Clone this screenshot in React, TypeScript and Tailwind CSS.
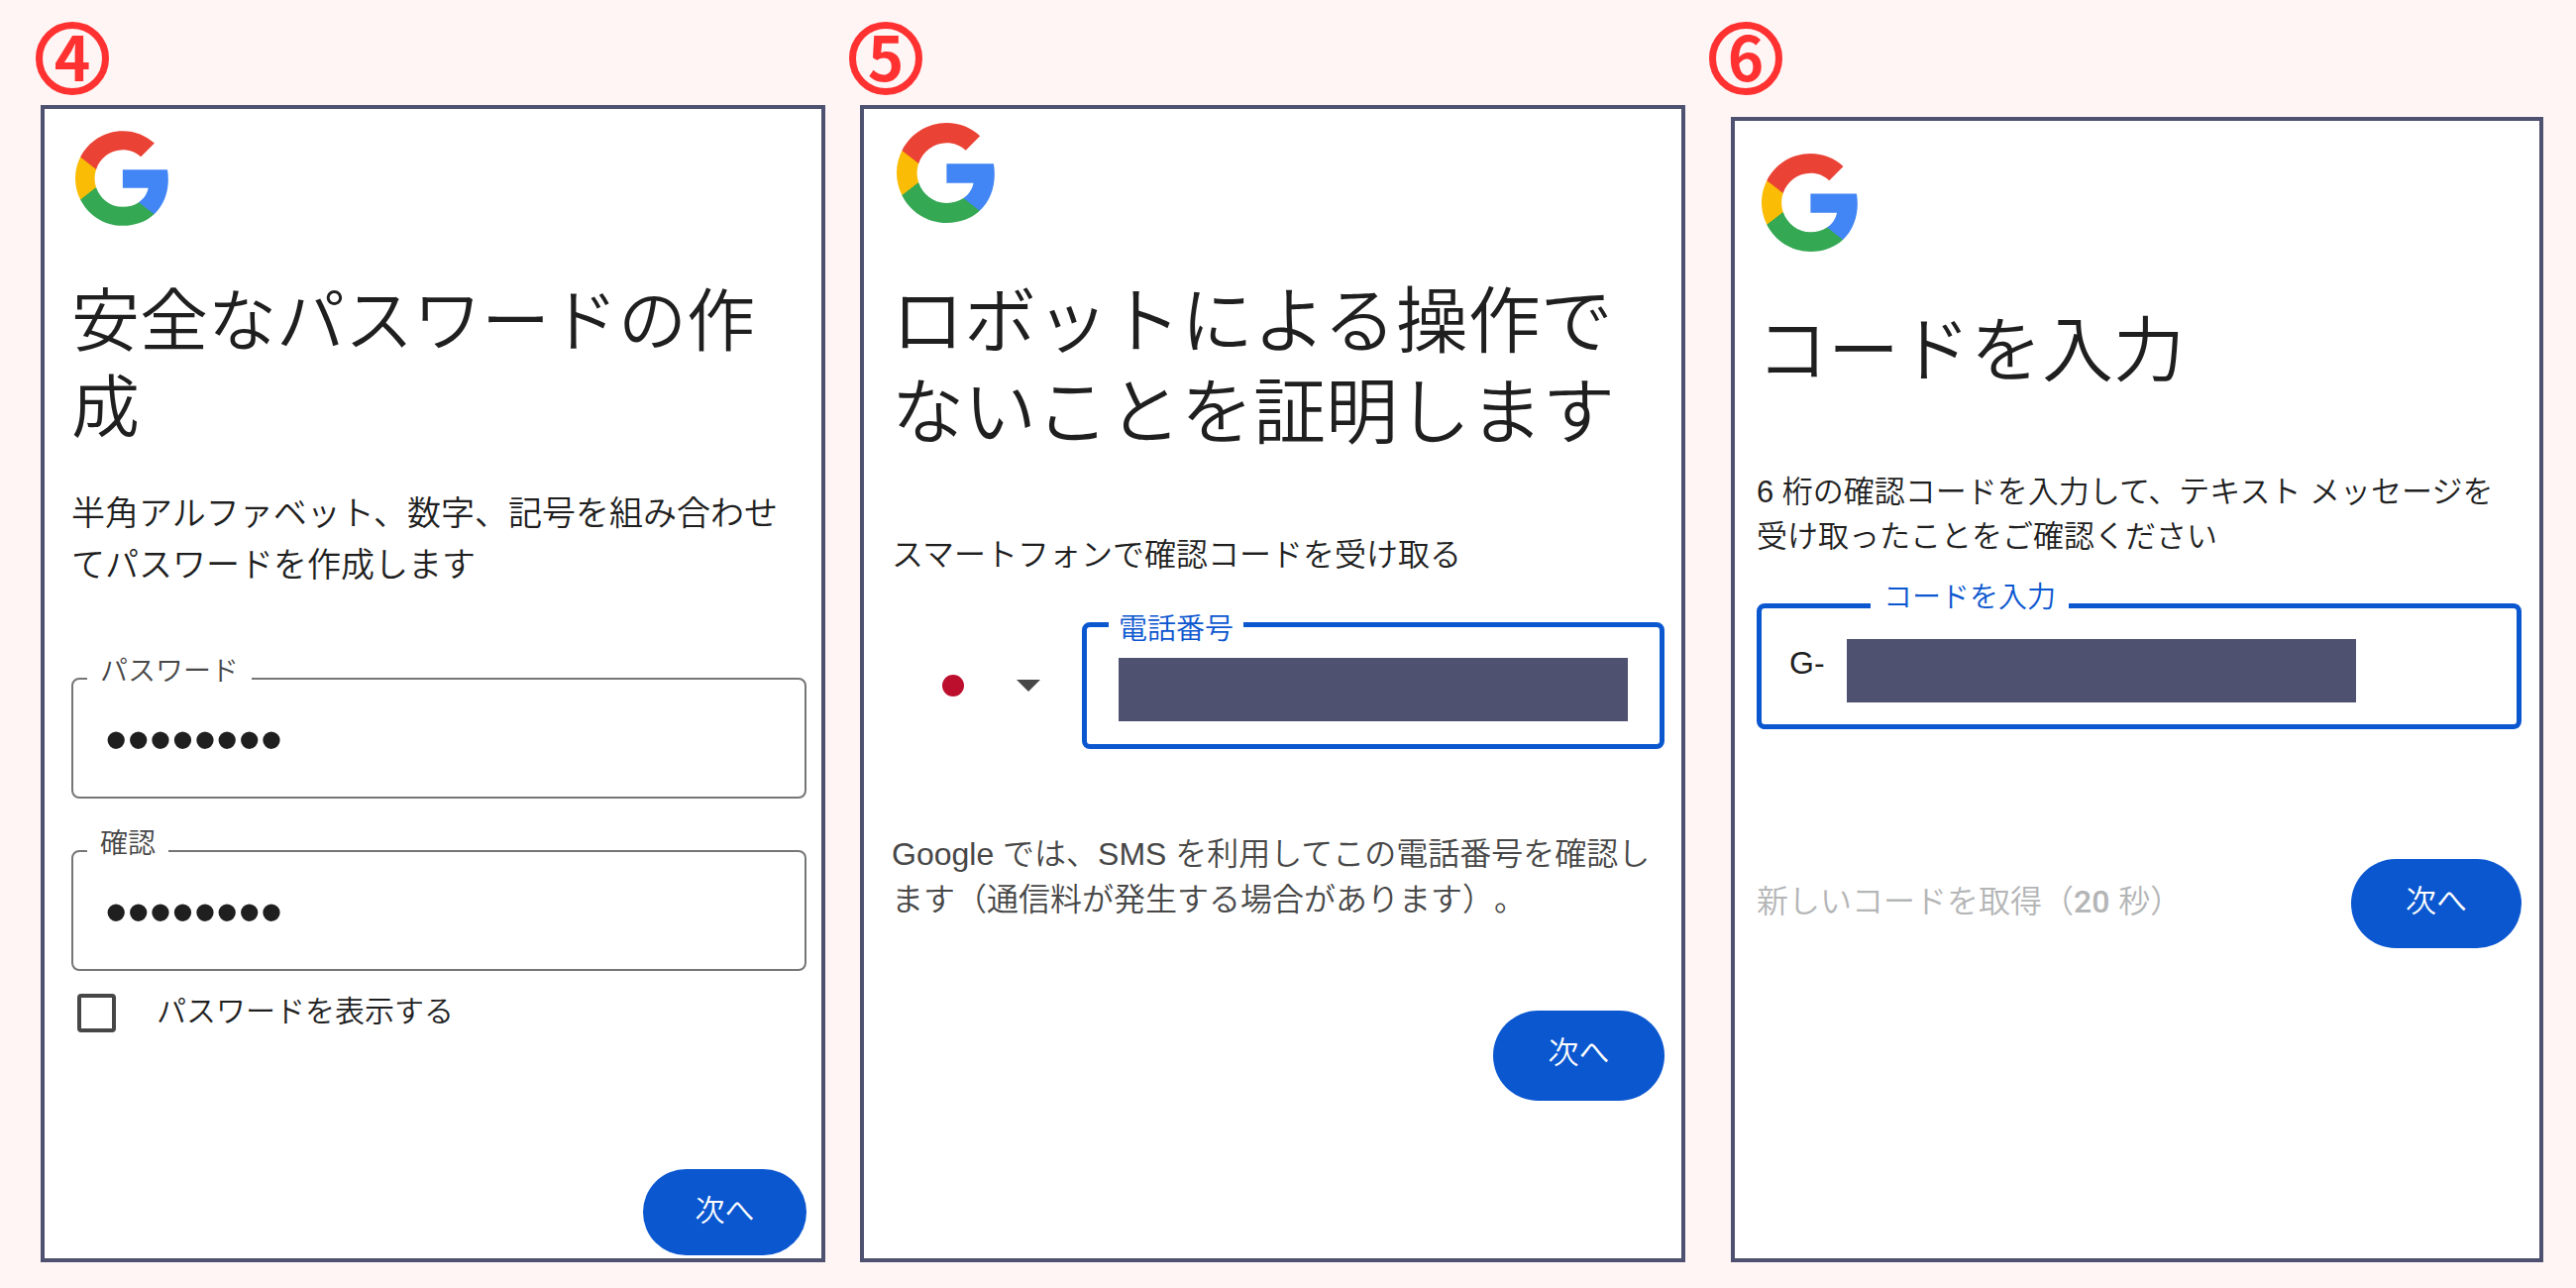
import React from "react";
import { useState } from "react";

function GoogleLogo({ className }: { className: string }){
    return(
        <svg viewBox="1 1 21.6 22" className={className} role="img" aria-label="Google">
            <path fill="#4285F4" d="M22.56 12.25c0-.78-.07-1.53-.2-2.25H12v4.26h5.92c-.26 1.37-1.04 2.53-2.21 3.31v2.77h3.57c2.08-1.92 3.28-4.74 3.28-8.09z" />
            <path fill="#34A853" d="M12 23c2.97 0 5.46-.98 7.28-2.66l-3.57-2.77c-.98.66-2.23 1.06-3.71 1.06-2.86 0-5.29-1.93-6.16-4.53H2.18v2.84C3.99 20.53 7.7 23 12 23z" />
            <path fill="#FBBC05" d="M5.84 14.09c-.22-.66-.35-1.36-.35-2.09s.13-1.43.35-2.09V7.07H2.18C1.43 8.55 1 10.22 1 12s.43 3.45 1.18 4.93l3.66-2.84z" />
            <path fill="#EA4335" d="M12 5.38c1.62 0 3.06.56 4.21 1.64l3.15-3.15C17.45 2.09 14.97 1 12 1 7.7 1 3.99 3.47 2.18 7.07l3.66 2.84c.87-2.6 3.3-4.53 6.16-4.53z" />
        </svg>
    )
}

function StepBadge({ number }: { number: number }){
    return(
        <div className="flex size-[74px] items-center justify-center rounded-full border-[7px] border-[#ff3131] pb-2 font-['Noto_Sans_CJK_JP',sans-serif] text-[62px] leading-none font-bold text-[#ff3131]">
            {number}
        </div>
    )
}

function PasswordField({ id, label, className }: { id: string, label: string, className: string }){
    const [value, setValue] = useState("password");

    return(
        <div className={`relative h-[122px] rounded-lg border-2 border-[#747775] ${className}`}>
            <label htmlFor={id} className="absolute -top-[26px] left-3.5 bg-white px-[13px] text-[28px] leading-9 text-[#474747]">{label}</label>
            <input type="password" id={id} name={id} className="block size-full bg-transparent px-8 pt-1 text-[64px] text-[#1f1f1f] outline-none" onChange={(e) => setValue(e.target.value)} value={value} />
        </div>
    )
}

function NextButton({ className }: { className: string }){
    return(
        <button type="button" className={`shrink-0 rounded-full bg-[#0b57d0] pb-1 text-white ${className}`}>次へ</button>
    )
}

export default function App(){
    const [show, setShow] = useState(false);

    return(
        <main className="grid min-h-screen grid-cols-[797fr_844fr_842fr] gap-6 bg-[#fff5f4] pt-[22px] pr-[33px] pb-[26px] pl-9 font-['Liberation_Sans','Noto_Sans_CJK_JP',sans-serif] font-[350] text-[#1f1f1f] [text-spacing-trim:space-all]" lang="ja">
            <section className="flex flex-col">
                <StepBadge number={4} />
                <form className="mt-2.5 ml-[5px] flex flex-1 flex-col border-4 border-[#4e5270] bg-white pt-[22px] pr-[15px] pb-[3px] pl-[27px]">
                    <GoogleLogo className="ml-1 h-24 w-[94px]" />
                    <h1 className="mt-[54px] text-[69px] leading-[87px]">安全なパスワードの作成</h1>
                    <p className="mt-[36px] text-[34px] leading-[52px]">半角アルファベット、数字、記号を組み合わせてパスワードを作成します</p>
                    <PasswordField id="password" label="パスワード" className="mt-[88px]" />
                    <PasswordField id="confirm" label="確認" className="mt-[52px]" />
                    <div className="mt-[23px] ml-1.5 flex h-[39px] items-center gap-[41px]">
                        <input type="checkbox" id="show" className="size-[39px] appearance-none rounded border-4 border-[#474747] checked:bg-[#0b57d0]" onChange={(e) => setShow(e.target.checked)} checked={show} />
                        <label htmlFor="show" className="pb-1 text-[30px]">パスワードを表示する</label>
                    </div>
                    <NextButton className="mt-auto h-[87px] w-[165px] self-end text-[30px]" />
                </form>
            </section>

            <section className="flex flex-col">
                <StepBadge number={5} />
                <form className="mt-2.5 ml-[11px] flex flex-1 flex-col border-4 border-[#4e5270] bg-white pt-3.5 pr-[17px] pl-7">
                    <GoogleLogo className="ml-[5px] h-[101px] w-[99px]" />
                    <h1 className="mt-[54px] text-[73px] leading-[92px]">ロボットによる操作でないことを証明します</h1>
                    <p className="mt-[74px] text-[32px] leading-[46px]">スマートフォンで確認コードを受け取る</p>
                    <div className="mt-[45px] flex">
                        <div className="relative flex w-[192px] shrink-0 items-center gap-[53px] pl-[51px]">
                            <span className="size-[22px] rounded-full bg-[#bc0f2d]"></span>
                            <svg viewBox="0 0 24 12" className="h-3 w-6" fill="#474747" aria-hidden="true">
                                <path d="M0 0h24L12 12z" />
                            </svg>
                            <select aria-label="国" name="country" className="absolute inset-0 opacity-0">
                                <option value="jp">日本</option>
                            </select>
                        </div>
                        <div className="relative flex h-32 flex-1 items-center rounded-lg border-[5px] border-[#0b57d0] px-8">
                            <label htmlFor="phone" className="absolute -top-4 left-[22px] bg-white px-[10px] text-[29px] leading-9 text-[#0b57d0]">電話番号</label>
                            <input type="tel" id="phone" name="phone" className="mt-2 h-16 w-full bg-[#4e5270] text-white outline-none" />
                        </div>
                    </div>
                    <p className="mt-[83px] text-[32px] leading-[46px] text-[#474747]">Google では、SMS を利用してこの電話番号を確認します（通信料が発生する場合があります）。</p>
                    <NextButton className="mt-[89px] h-[91px] w-[173px] self-end text-[31px]" />
                </form>
            </section>

            <section className="flex flex-col">
                <StepBadge number={6} />
                <form className="mt-[22px] ml-[22px] flex flex-1 flex-col border-4 border-[#4e5270] bg-white pt-[33px] pr-[18px] pl-[22px]">
                    <GoogleLogo className="ml-[5px] h-[99px] w-[97px]" />
                    <h1 className="mt-[54px] text-[72px] leading-[92px]">コードを入力</h1>
                    <p className="mt-[74px] text-[31px] leading-[45px]">6 桁の確認コードを入力して、テキスト メッセージを受け取ったことをご確認ください</p>
                    <div className="relative mt-[45px] flex h-[127px] items-center rounded-lg border-[5px] border-[#0b57d0] px-7">
                        <label htmlFor="code" className="absolute -top-[29px] left-[110px] bg-white px-[13px] text-[29px] leading-9 text-[#0b57d0]">コードを入力</label>
                        <span className="w-[58px] pb-2 text-[32px]">G-</span>
                        <input type="text" id="code" name="code" className="mt-2 h-16 w-[514px] bg-[#4e5270] text-white outline-none" />
                    </div>
                    <div className="mt-[131px] flex items-center justify-between">
                        <p className="pb-1 text-[32px] text-[#b4b5b6]">新しいコードを取得（<span className="font-[Roboto,sans-serif] font-medium">20</span> 秒）</p>
                        <NextButton className="h-[90px] w-[172px] text-[31px]" />
                    </div>
                </form>
            </section>
        </main>
    )
}
